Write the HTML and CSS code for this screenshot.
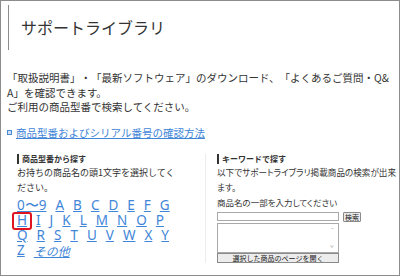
FILE: index.html
```html
<!DOCTYPE html>
<html lang="ja">
<head>
<meta charset="utf-8">
<link rel="stylesheet" href="styles.css">
</head>
<body>
<div class="frame">
  <h1 class="title">サポートライブラリ</h1>
  <p class="lead">「取扱説明書」・「最新ソフトウェア」のダウンロード、「よくあるご質問・Q&amp;<wbr>A」を確認できます。<br>ご利用の商品型番で検索してください。</p>
  <p class="howto"><span class="sq"></span><a href="#">商品型番およびシリアル番号の確認方法</a></p>
  <div class="cols">
    <div class="col left">
      <h2 class="sub">商品型番から探す</h2>
      <p class="desc">お持ちの商品名の頭1文字を選択してください。</p>
      <div class="letters">
        <div class="row"><a href="#">0〜9</a><a href="#">A</a><a href="#">B</a><a href="#">C</a><a href="#">D</a><a href="#">E</a><a href="#">F</a><a href="#">G</a></div>
        <div class="row"><a href="#" class="current">H</a><a href="#">I</a><a href="#">J</a><a href="#">K</a><a href="#">L</a><a href="#">M</a><a href="#">N</a><a href="#">O</a><a href="#">P</a></div>
        <div class="row"><a href="#">Q</a><a href="#">R</a><a href="#">S</a><a href="#">T</a><a href="#">U</a><a href="#">V</a><a href="#">W</a><a href="#">X</a><a href="#">Y</a></div>
        <div class="row"><a href="#">Z</a><a href="#" class="other">その他</a></div>
      </div>
    </div>
    <div class="col right">
      <h2 class="sub">キーワードで探す</h2>
      <p class="desc">以下でサポートライブラリ掲載商品の検索が出来ます。</p>
      <p class="label">商品名の一部を入力してください</p>
      <div class="searchrow"><span class="field"></span><span class="btn small">検索</span></div>
      <div class="listbox"><span class="arrow up">&#710;</span><span class="arrow down">&#711;</span></div>
      <div class="btn wide">選択した商品のページを開く</div>
    </div>
  </div>
</div>
</body>
</html>
```
FILE: styles.css
```css
* { box-sizing: border-box; }
body {
  margin: 0;
  font-family: "Noto Sans CJK JP", "Noto Sans", sans-serif;
  color: #333;
  background: #fff;
  text-spacing-trim: space-all;
}
.frame {
  width: 400px;
  height: 276px;
  border: 1px solid #8c8c8c;
  overflow: hidden;
}
.title {
  margin: 4px 0 0 7px;
  height: 45px;
  border-left: 1px solid #8c8c8c;
  padding-left: 12px;
  font-size: 16px;
  font-weight: normal;
  line-height: 45px;
  color: #333;
}
.lead {
  margin: 21px 0 0 6px;
  font-size: 10.5px;
  line-height: 14.5px;
  width: 386px;
}
.howto {
  margin: 11px 0 0 6px;
  font-size: 10.5px;
  line-height: 14px;
  display: flex;
  align-items: center;
}
.sq {
  width: 5px;
  height: 5px;
  border: 1px solid #4a8ad6;
  background: #cfe0f5;
  margin-right: 4px;
}
a { color: #3f86d8; }
.cols {
  display: flex;
  margin-top: 14px;
}
.col.left { width: 204px; flex: none; padding-left: 16px; }
.col.right {
  flex: 1;
  border-left: 1px solid #ececec;
  padding-left: 11px;
}
.sub {
  margin: 0;
  font-size: 8px;
  line-height: 10px;
  font-weight: bold;
  border-left: 2px solid #333;
  padding-left: 3px;
}
.desc {
  margin: 1.5px 0 0 0;
  font-size: 9px;
  line-height: 15px;
  width: 162px;
}
.col.right .desc {
  width: 182px;
  font-size: 8.6px;
  font-feature-settings: "palt";
}
.letters { margin-top: 3px; }
.row {
  display: flex;
  gap: 9px;
  font-size: 13.5px;
  line-height: 15px;
  height: 15px;
  font-family: "Noto Sans", sans-serif;
}
.row a { position: relative; }
.row a.current::after {
  content: "";
  position: absolute;
  left: -5px; right: -5px; top: -1px; bottom: -2px;
  border: 2px solid #e0141e;
  border-radius: 3px;
}
.row a.other {
  font-family: "Noto Sans CJK JP", sans-serif;
  font-style: italic;
  font-size: 12px;
}
.label {
  margin: 0.5px 0 0 0;
  font-size: 8.5px;
  line-height: 12px;
  font-feature-settings: "palt";
}
.searchrow {
  display: flex;
  align-items: center;
  gap: 4px;
  margin-top: 4px;
}
.field {
  width: 122px;
  height: 9px;
  border: 1px solid #a9a9a9;
}
.btn {
  border: 1px solid #8a8a8a;
  background: #ececec;
  font-size: 7px;
  line-height: 8px;
  text-align: center;
  color: #222;
}
.btn.small { width: 18px; height: 10px; border-radius: 1px; }
.listbox {
  position: relative;
  width: 122px;
  height: 30px;
  border: 1px solid #a9a9a9;
  margin-top: 1px;
}
.arrow {
  position: absolute;
  right: 4px;
  font-size: 7px;
  line-height: 6px;
  color: #aaa;
}
.arrow.up { top: 3px; }
.arrow.down { bottom: 1px; }
.btn.wide { width: 122px; height: 10px; }
```
